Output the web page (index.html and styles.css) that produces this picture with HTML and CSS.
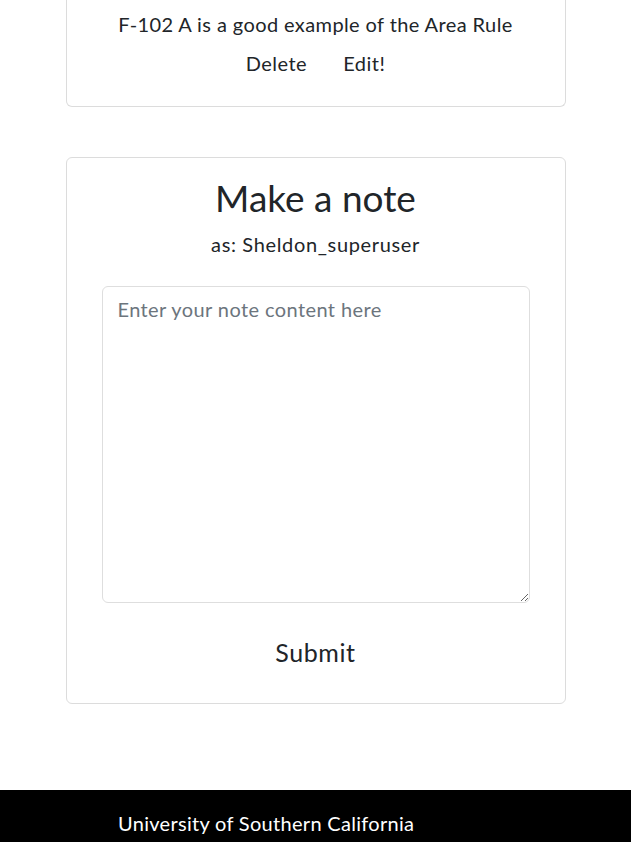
FILE: index.html
```html
<!DOCTYPE html>
<html lang="en">
<head>
<meta charset="utf-8">
<title>Notes</title>
<link rel="stylesheet" href="styles.css">
</head>
<body>
<main class="main">
  <section class="card card-note">
    <p class="note-text">F-102 A is a good example of the Area Rule</p>
    <div class="note-actions">
      <a class="action">Delete</a>
      <a class="action">Edit!</a>
    </div>
  </section>
  <section class="card card-form">
    <h1 class="form-title">Make a note</h1>
    <p class="form-user">as: Sheldon_superuser</p>
    <textarea class="form-input" placeholder="Enter your note content here"></textarea>
    <button class="form-submit" type="button">Submit</button>
  </section>
</main>
<footer class="footer">
  <p class="footer-text">University of Southern California</p>
</footer>
</body>
</html>
```
FILE: styles.css
```css
* { box-sizing: border-box; }
html, body { margin: 0; padding: 0; }
body {
  font-family: Lato, "Open Sans", sans-serif;
  color: #212529;
  background: #fff;
}
.main {
  width: 500px;
  margin: 0 auto;
  display: flex;
  flex-direction: column;
}
.card {
  border: 1px solid #dcdcdc;
  border-radius: 6px;
  background: #fff;
  display: flex;
  flex-direction: column;
  align-items: center;
}
.card-note {
  border-top: none;
  border-top-left-radius: 0;
  border-top-right-radius: 0;
  padding: 9px 0 28px;
}
.note-text {
  margin: 0;
  font-size: 20px;
  line-height: 30px;
  letter-spacing: 0.4px;
}
.note-actions {
  margin-top: 9px;
  display: flex;
  gap: 36px;
  font-size: 20px;
  line-height: 30px;
  letter-spacing: 0.5px;
}
.action { color: #212529; cursor: pointer; }
.card-form {
  margin-top: 50px;
  padding: 17px 0 33px;
}
.form-title {
  margin: 0;
  font-size: 37px;
  font-weight: 400;
  line-height: 46px;
}
.form-user {
  margin: 8px 0 0;
  font-size: 20px;
  line-height: 30px;
  letter-spacing: 0.65px;
}
.form-input {
  margin-top: 27px;
  width: 428px;
  height: 317px;
  border: 1px solid #dedede;
  border-radius: 6px;
  padding: 7px 15px;
  font-family: inherit;
  font-size: 20px;
  line-height: 30px;
  letter-spacing: 0.4px;
  color: #212529;
}
.form-input::placeholder { color: #6c757d; }
.form-submit {
  margin-top: 31px;
  background: none;
  border: none;
  padding: 0;
  font-family: inherit;
  font-size: 25px;
  line-height: 36px;
  letter-spacing: 0.6px;
  color: #212529;
}
.footer {
  margin-top: 86px;
  background: #000;
  padding: 18px 0 20px 118px;
}
.footer-text {
  margin: 0;
  color: #fff;
  font-size: 20px;
  line-height: 30px;
  letter-spacing: 0.3px;
}
```
